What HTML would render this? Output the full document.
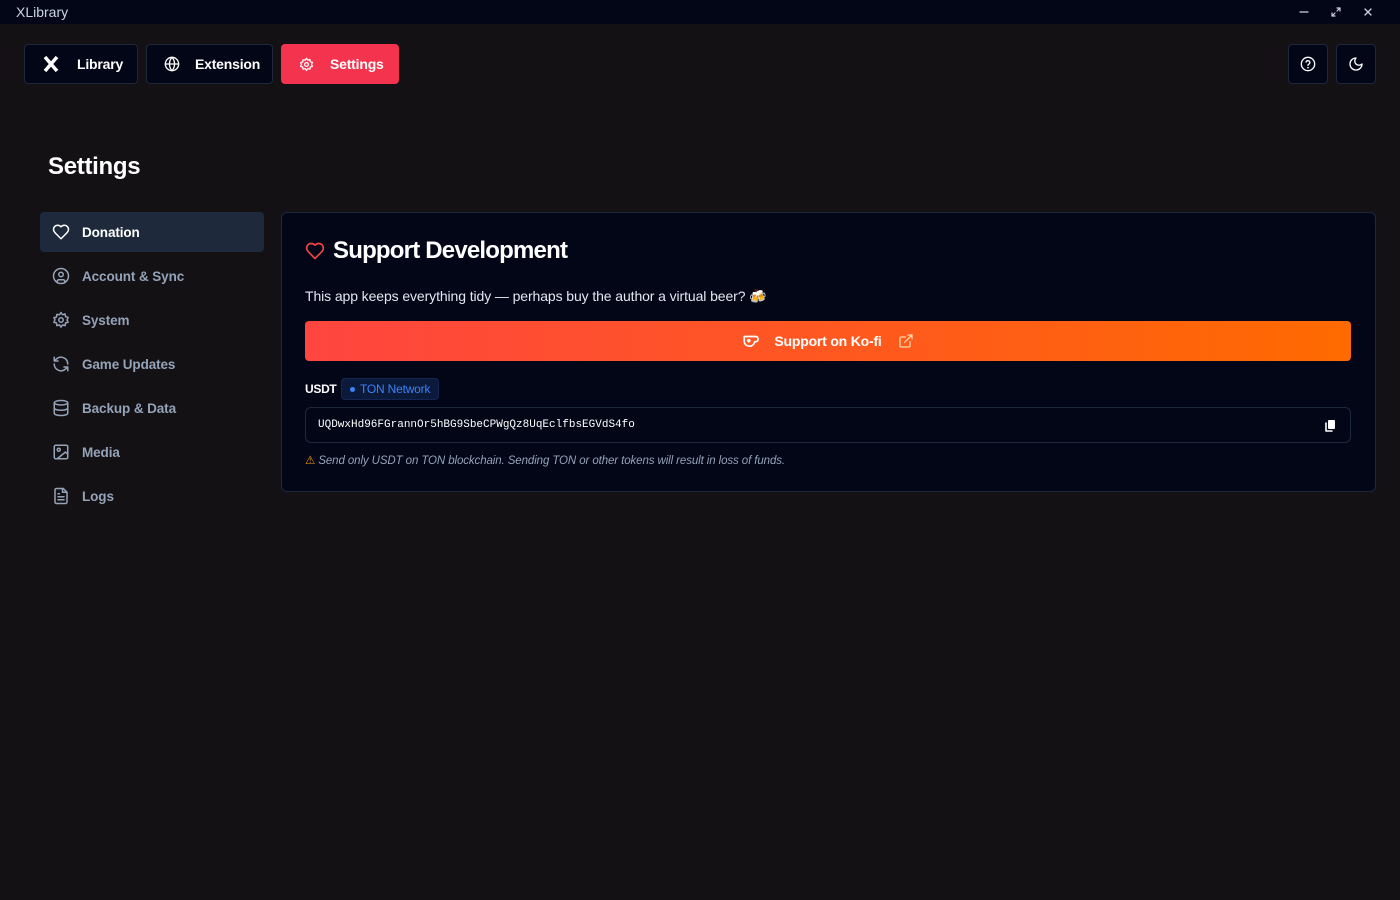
<!DOCTYPE html>
<html><head><meta charset="utf-8"><style>
*{box-sizing:border-box;margin:0;padding:0}
body{width:1400px;height:900px;background:#131114;font-family:"Liberation Sans",sans-serif;color:#fff;position:relative;overflow:hidden}
.tb{position:absolute;left:0;top:0;width:1400px;height:24px;background:#020617;font-size:14px;color:#cbd5e1}
.tb .t{position:absolute;left:16px;top:4px}
.btn{position:absolute;top:44px;height:40px;border:1px solid #1e293b;background:#020617;border-radius:4px;display:flex;align-items:center;font-weight:bold;font-size:14px;letter-spacing:-0.2px}
.nav{position:absolute;left:40px;width:224px;height:40px;display:flex;align-items:center;font-size:13.5px;color:#94a3b8;font-weight:bold;border-radius:4px;letter-spacing:-0.1px}
.nav svg{position:absolute;left:12px}
.nav span{position:absolute;left:42px}
svg{fill:none;stroke:currentColor;stroke-width:2;stroke-linecap:round;stroke-linejoin:round}
</style></head><body>
<div class="tb"><span class="t">XLibrary</span>
<svg style="position:absolute;left:1299px;top:7px" width="10" height="10" viewBox="0 0 10 10"><path d="M1 5h8" stroke-width="1.2"/></svg>
<svg style="position:absolute;left:1331px;top:7px" width="10" height="10" viewBox="0 0 10 10"><path d="M1 9l3-3M6 4l3-3M1 6v3h3M6 1h3v3" stroke-width="1.2"/></svg>
<svg style="position:absolute;left:1363px;top:7px" width="10" height="10" viewBox="0 0 10 10"><path d="M2 2l6 6M8 2l-6 6" stroke-width="1.3"/></svg>
</div>
<div class="btn" style="left:24px;width:114px"><svg style="position:absolute;left:17px" width="18" height="18" viewBox="0 0 18 18"><path d="M3 2l12 14M15 2L3 16" stroke-width="3.5" stroke-linecap="butt"/></svg><span style="position:absolute;left:52px">Library</span></div>
<div class="btn" style="left:146px;width:127px"><svg style="position:absolute;left:17px" width="16" height="16" viewBox="0 0 24 24"><circle cx="12" cy="12" r="10"/><path d="M2 12h20M12 2a15 15 0 0 1 0 20a15 15 0 0 1 0-20"/></svg><span style="position:absolute;left:48px">Extension</span></div>
<div class="btn" style="left:281px;width:118px;background:#f4344f;border-color:#f4344f"><svg style="position:absolute;left:17px" width="15" height="15" viewBox="0 0 24 24"><circle cx="12" cy="12" r="3"/><path d="M12 2l2 3 3.5-1 .5 3.5 3.5 1-1.5 3.5 1.5 3-3.5 1-.5 3.5-3.5-1-2 3-2-3-3.5 1-.5-3.5-3.5-1 1.5-3.5L2.5 9l3.5-1L6.5 4.5 10 5z"/></svg><span style="position:absolute;left:48px">Settings</span></div>
<div class="btn" style="left:1288px;width:40px;justify-content:center"><svg width="16" height="16" viewBox="0 0 24 24"><circle cx="12" cy="12" r="10"/><path d="M9.1 9a3 3 0 0 1 5.8 1c0 2-3 2.5-3 4"/><path d="M12 17.5h.01" stroke-width="2.5"/></svg></div>
<div class="btn" style="left:1336px;width:40px;justify-content:center"><svg width="16" height="16" viewBox="0 0 24 24"><path d="M12 3a6 6 0 0 0 9 9 9 9 0 1 1-9-9z"/></svg></div>

<div style="position:absolute;left:48px;top:153px;font-size:24px;font-weight:bold;letter-spacing:-0.3px">Settings</div>

<div class="nav" style="top:212px;background:#1e293b;color:#fff"><svg width="18" height="18" viewBox="0 0 24 24"><path d="M19 14c1.5-1.5 3-3.2 3-5.5A5.5 5.5 0 0 0 16.5 3c-1.8 0-3 .5-4.5 2-1.5-1.5-2.7-2-4.5-2A5.5 5.5 0 0 0 2 8.5c0 2.3 1.5 4 3 5.5l7 7z"/></svg><span>Donation</span></div>
<div class="nav" style="top:256px"><svg width="18" height="18" viewBox="0 0 24 24"><circle cx="12" cy="12" r="10"/><circle cx="12" cy="10" r="3"/><path d="M7 20.7V19a2 2 0 0 1 2-2h6a2 2 0 0 1 2 2v1.7"/></svg><span>Account &amp; Sync</span></div>
<div class="nav" style="top:300px"><svg width="18" height="18" viewBox="0 0 24 24"><circle cx="12" cy="12" r="3"/><path d="M12 2l2 3 3.5-1 .5 3.5 3.5 1-1.5 3.5 1.5 3-3.5 1-.5 3.5-3.5-1-2 3-2-3-3.5 1-.5-3.5-3.5-1 1.5-3.5L2.5 9l3.5-1L6.5 4.5 10 5z"/></svg><span>System</span></div>
<div class="nav" style="top:344px"><svg width="18" height="18" viewBox="0 0 24 24"><path d="M21 12a9 9 0 0 0-15-6.7L3 8M3 3v5h5M3 12a9 9 0 0 0 15 6.7l3-2.7M21 21v-5h-5"/></svg><span>Game Updates</span></div>
<div class="nav" style="top:388px"><svg width="18" height="18" viewBox="0 0 24 24"><ellipse cx="12" cy="5" rx="9" ry="3"/><path d="M3 5v14c0 1.7 4 3 9 3s9-1.3 9-3V5M3 12c0 1.7 4 3 9 3s9-1.3 9-3"/></svg><span>Backup &amp; Data</span></div>
<div class="nav" style="top:432px"><svg width="18" height="18" viewBox="0 0 24 24"><rect x="3" y="3" width="18" height="18" rx="2"/><circle cx="9" cy="9" r="2"/><path d="M21 15l-3-3-11 9"/></svg><span>Media</span></div>
<div class="nav" style="top:476px"><svg width="18" height="18" viewBox="0 0 24 24"><path d="M15 2H6a2 2 0 0 0-2 2v16a2 2 0 0 0 2 2h12a2 2 0 0 0 2-2V7z"/><path d="M14 2v5h5M16 13H8M16 17H8M10 9H8"/></svg><span>Logs</span></div>

<div style="position:absolute;left:281px;top:212px;width:1095px;height:280px;background:#020617;border:1px solid #1e293b;border-radius:6px">
<svg style="position:absolute;left:23px;top:28px;stroke:#ef4444" width="20" height="20" viewBox="0 0 24 24"><path d="M19 14c1.5-1.5 3-3.2 3-5.5A5.5 5.5 0 0 0 16.5 3c-1.8 0-3 .5-4.5 2-1.5-1.5-2.7-2-4.5-2A5.5 5.5 0 0 0 2 8.5c0 2.3 1.5 4 3 5.5l7 7z"/></svg>
<div style="position:absolute;left:51px;top:24px;font-size:24px;font-weight:bold;letter-spacing:-0.8px">Support Development</div>
<div style="position:absolute;left:23px;top:75px;font-size:14px;color:#e2e8f0;letter-spacing:-0.1px">This app keeps everything tidy — perhaps buy the author a virtual beer? 🍻</div>
<div style="position:absolute;left:23px;top:108px;width:1046px;height:40px;border-radius:4px;background:linear-gradient(90deg,#ff4540,#ff6a00);display:flex;align-items:center;justify-content:center;font-weight:bold;font-size:14px;letter-spacing:-0.2px">
<svg width="18" height="16" viewBox="0 0 24 20" style="margin-right:14px"><path d="M3 4h15a3 3 0 0 1 0 7h-1c-1 4-4 6-7 6s-7-2-7-7z" stroke-width="2.2"/><path d="M9 12l-2-2a1.5 1.5 0 0 1 2-2 1.5 1.5 0 0 1 2 2z" fill="#fff" stroke-width="1"/></svg>
Support on Ko-fi
<svg width="16" height="16" viewBox="0 0 24 24" style="margin-left:16px;stroke:#fed7aa"><path d="M18 13v6a2 2 0 0 1-2 2H5a2 2 0 0 1-2-2V8a2 2 0 0 1 2-2h6M15 3h6v6M10 14L21 3"/></svg></div>
<div style="position:absolute;left:23px;top:169px;font-size:12px;font-weight:bold;letter-spacing:-0.3px">USDT</div>
<div style="position:absolute;left:59px;top:165px;height:22px;padding:0 8px 0 18px;border:1px solid #172554;background:#0b1a3a;border-radius:4px;font-size:12px;color:#3b82f6;line-height:20px;letter-spacing:-0.2px">
<span style="position:absolute;left:8px;top:8px;width:5px;height:5px;border-radius:50%;background:#3b82f6"></span>TON Network</div>
<div style="position:absolute;left:23px;top:194px;width:1046px;height:36px;border:1px solid #1e293b;border-radius:6px;font-family:'Liberation Mono',monospace;font-size:11px;line-height:34px;padding-left:12px">UQDwxHd96FGrannOr5hBG9SbeCPWgQz8UqEclfbsEGVdS4fo
<svg style="position:absolute;right:14px;top:11px" width="12" height="13" viewBox="0 0 12 13"><rect x="4" y="1" width="7" height="9" rx="1" fill="#fff" stroke="none"/><path d="M2 4v8h6" stroke-width="1.6"/></svg></div>
<div style="position:absolute;left:23px;top:240px;font-size:11.5px;color:#94a3b8;font-style:italic;letter-spacing:-0.1px"><span style="color:#f59e0b;font-style:normal">⚠</span> Send only USDT on TON blockchain. Sending TON or other tokens will result in loss of funds.</div>
</div>
</body></html>
